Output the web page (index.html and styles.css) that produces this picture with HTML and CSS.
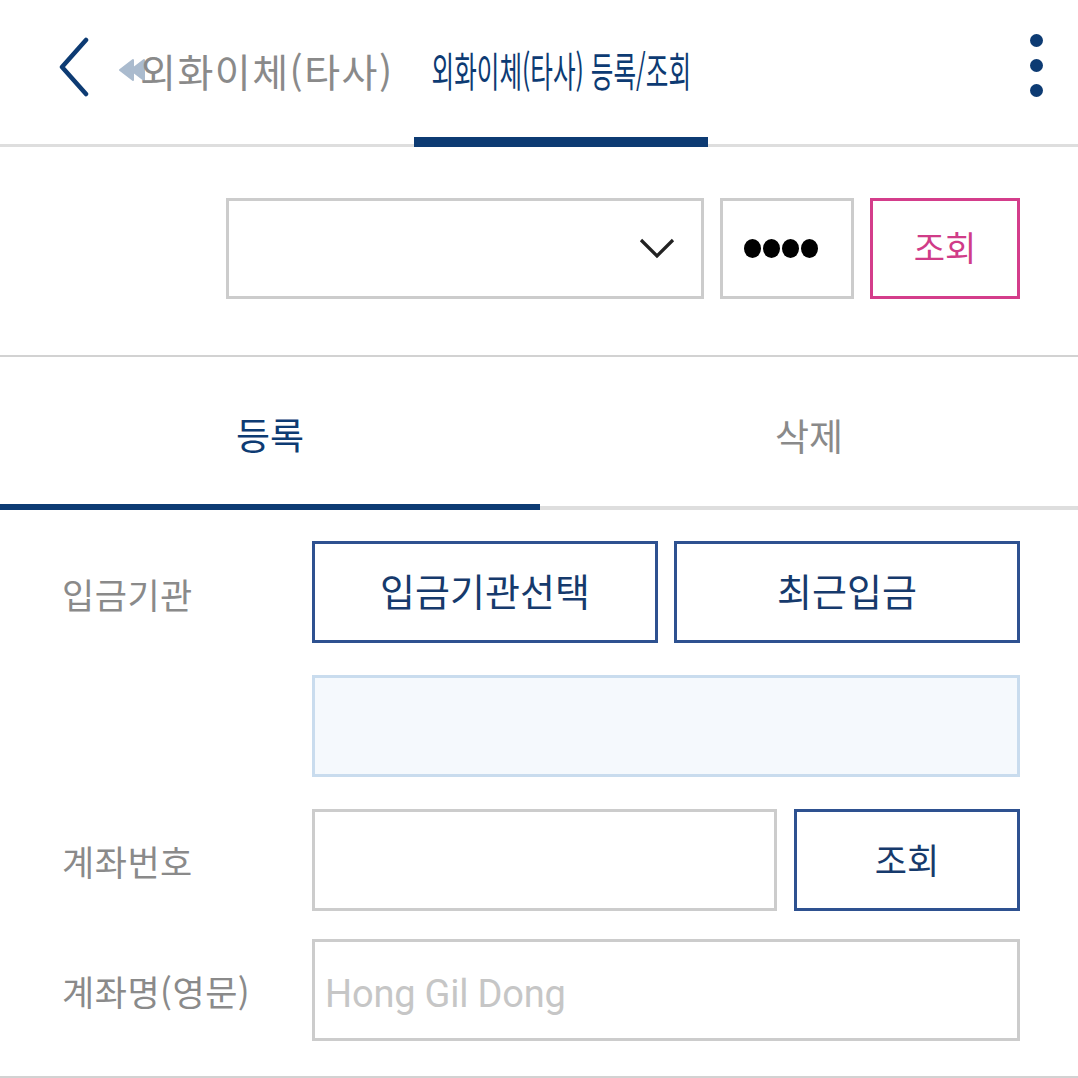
FILE: index.html
```html
<!DOCTYPE html>
<html lang="ko">
<head>
<meta charset="utf-8">
<title>외화이체(타사) 등록/조회</title>
<link rel="stylesheet" href="styles.css">
</head>
<body>
<div class="screen">
  <header class="appbar">
    <button class="back" aria-label="뒤로">
      <svg width="36" height="60" viewBox="0 0 36 60"><polyline points="30,3 6,30 30,57" fill="none" stroke="#0d3b73" stroke-width="4.5" stroke-linecap="round" stroke-linejoin="round"/></svg>
    </button>
    <div class="tab tab-prev">
      <svg class="prev-icon" width="30" height="24" viewBox="0 0 30 24"><polygon points="1,12 14,2 14,22" fill="#aabbce" stroke="#aabbce" stroke-width="2" stroke-linejoin="round"/><polygon points="12,12 25,2 25,22" fill="#aabbce" stroke="#aabbce" stroke-width="2" stroke-linejoin="round"/></svg>
      <span class="prev-label">외화이체(타사)</span>
    </div>
    <div class="tab tab-current">
      <span class="current-label">외화이체(타사) 등록/조회</span>
    </div>
    <div class="spacer"></div>
    <button class="more" aria-label="메뉴">
      <span class="dot"></span><span class="dot"></span><span class="dot"></span>
    </button>
  </header>

  <section class="query">
    <div class="select">
      <svg width="36" height="22" viewBox="0 0 36 22"><polyline points="2,3 18,19 34,3" fill="none" stroke="#222" stroke-width="3.2"/></svg>
    </div>
    <div class="pin"><span class="pd"></span><span class="pd"></span><span class="pd"></span><span class="pd"></span></div>
    <button class="btn-pink">조회</button>
  </section>

  <nav class="segtabs">
    <div class="seg seg-active">등록</div>
    <div class="seg">삭제</div>
  </nav>

  <section class="form">
    <div class="row row-1">
      <div class="label">입금기관</div>
      <div class="controls two">
        <button class="btn-navy">입금기관선택</button>
        <button class="btn-navy">최근입금</button>
      </div>
    </div>
    <div class="row row-2">
      <div class="label"></div>
      <div class="controls"><div class="info-box"></div></div>
    </div>
    <div class="row row-3">
      <div class="label">계좌번호</div>
      <div class="controls acct">
        <div class="input"></div>
        <button class="btn-navy">조회</button>
      </div>
    </div>
    <div class="row row-4">
      <div class="label">계좌명(영문)</div>
      <div class="controls">
        <div class="input placeholder">Hong Gil Dong</div>
      </div>
    </div>
  </section>
</div>
</body>
</html>
```

FILE: styles.css
```css
* { box-sizing: border-box; }
html, body { margin: 0; padding: 0; background: #fff; }
body {
  font-family: "Noto Sans CJK KR", "Noto Sans", sans-serif;
  width: 1078px;
  height: 1078px;
  overflow: hidden;
}
button {
  font-family: inherit;
  background: #fff;
  margin: 0;
  padding: 0;
  cursor: pointer;
}

/* App bar */
.appbar {
  display: flex;
  align-items: stretch;
  height: 147px;
  padding-left: 56px;
  box-shadow: inset 0 -3px 0 #dedede;
}
.back {
  border: 0;
  width: 63px;
  display: flex;
  align-items: center;
  justify-content: flex-start;
  padding-bottom: 14px;
  background: transparent;
}
.tab {
  display: flex;
  align-items: center;
  line-height: 1;
}
.tab-prev {
  padding-bottom: 6px;
  width: 295px;
}
.prev-icon { margin-right: -9px; margin-top: -2px; }
.prev-label {
  font-size: 39px;
  color: #8a8a8a;
  letter-spacing: 1.5px;
}
.tab-current {
  width: 294px;
  justify-content: center;
  border-bottom: 10px solid #0d3b73;
  padding-top: 2px;
}
.current-label {
  display: inline-block;
  white-space: nowrap;
  font-size: 41px;
  color: #0d3b73;
  transform: scaleX(0.6);
  transform-origin: center;
}
.spacer { flex: 1; }
.more {
  border: 0;
  width: 56px;
  margin-right: 14px;
  display: flex;
  flex-direction: column;
  align-items: center;
  justify-content: flex-start;
  padding-top: 34px;
  gap: 12px;
  background: transparent;
}
.dot {
  width: 13px;
  height: 13px;
  border-radius: 50%;
  background: #0d3b73;
}

/* Query row */
.query {
  display: flex;
  justify-content: flex-end;
  gap: 16px;
  padding: 51px 58px 56px 0;
  border-bottom: 2px solid #d2d2d2;
}
.select {
  width: 478px;
  height: 101px;
  border: 3px solid #cccccc;
  display: flex;
  align-items: center;
  justify-content: flex-end;
  padding-right: 26px;
  padding-bottom: 2px;
}
.pin {
  width: 134px;
  height: 101px;
  border: 3px solid #cccccc;
  display: flex;
  align-items: center;
  padding-left: 21px;
  gap: 2px;
}
.pd {
  width: 17px;
  height: 19px;
  border-radius: 50%;
  background: #000;
}
.btn-pink {
  width: 150px;
  height: 101px;
  border: 3px solid #d43d8b;
  color: #d03c88;
  font-size: 34px;
  line-height: 1;
  padding-bottom: 4px;
}

/* Segmented tabs */
.segtabs {
  display: grid;
  grid-template-columns: 540px 1fr;
}
.seg {
  height: 153px;
  display: flex;
  align-items: center;
  justify-content: center;
  padding-top: 8px;
  font-size: 37px;
  line-height: 1;
  color: #8a8a8a;
  border-bottom: 4px solid #dedede;
}
.seg-active {
  color: #0d3b73;
  border-bottom: 6px solid #0d3b73;
}

/* Form */
.form {
  padding: 31px 58px 35px 0;
  border-bottom: 2px solid #d2d2d2;
}
.row {
  display: grid;
  grid-template-columns: 312px 1fr;
  height: 102px;
}
.row-2, .row-3 { margin-top: 32px; }
.row-4 { margin-top: 28px; }
.label {
  padding-left: 62px;
  align-self: center;
  font-size: 35px;
  line-height: 1;
  color: #8a8a8a;
  letter-spacing: 0.5px;
}
.row-1 .label { margin-top: 2px; }
.controls { display: flex; gap: 16px; }
.two > * { flex: 1; }
.btn-navy {
  height: 102px;
  border: 3px solid #2e5190;
  color: #163a6c;
  font-size: 38px;
  line-height: 1;
  padding-bottom: 4px;
}
.info-box {
  flex: 1;
  height: 102px;
  border: 3px solid #c9dcee;
  background: #f5f9fd;
}
.acct { gap: 17px; }
.acct .input { width: 465px; flex: none; }
.acct .btn-navy { flex: 1; font-size: 35px; }
.input {
  flex: 1;
  height: 102px;
  border: 3px solid #cccccc;
}
.placeholder {
  display: flex;
  align-items: center;
  padding-left: 10px;
  padding-top: 8px;
  font-family: Roboto, "Noto Sans", sans-serif;
  font-size: 38px;
  letter-spacing: -0.2px;
  color: #c6c6c6;
}
```
